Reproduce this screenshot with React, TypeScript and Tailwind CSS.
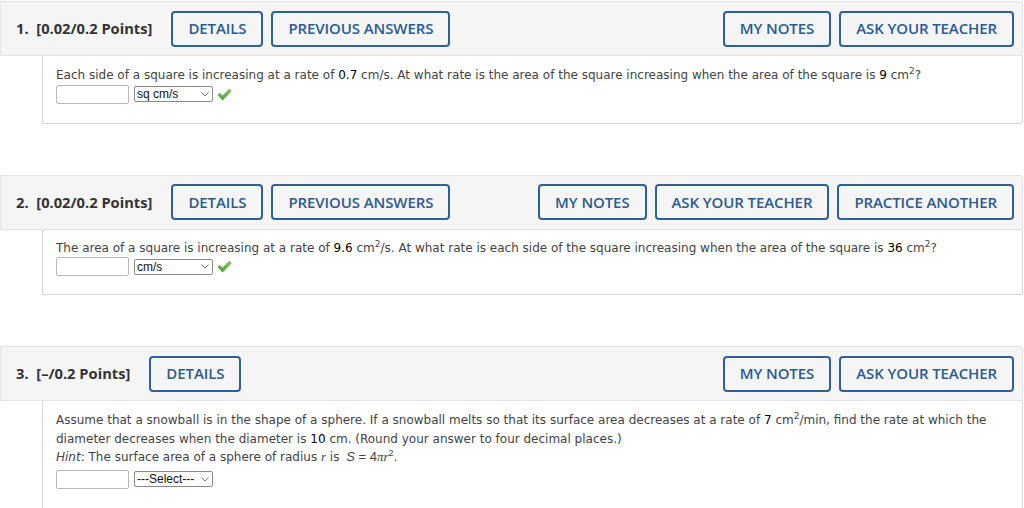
import React from "react";

const Btn = ({ children }: { children: React.ReactNode }) => (
  <div className="h-[36px] px-[15px] flex items-center border-2 border-[#2f6198] rounded-[4px] text-[#2b5b90] text-[15px] font-semibold tracking-[-0.1px] whitespace-nowrap bg-[#f5f5f5]" style={{ fontFamily: '"Open Sans", sans-serif' }}>
    {children}
  </div>
);

const Check = () => (
  <svg width="15" height="13" viewBox="0 0 15 13" className="ml-[4px]">
    <defs>
      <linearGradient id="cg" x1="0" y1="0" x2="0" y2="1">
        <stop offset="0" stopColor="#8fcb6a" />
        <stop offset="1" stopColor="#4e9a3a" />
      </linearGradient>
    </defs>
    <path d="M0.3 7 L2.8 4.8 L5.6 7.6 L12.4 0.6 L14.8 2.9 L5.6 12.4 Z" fill="url(#cg)" />
  </svg>
);

const Select = ({ label, w }: { label: string; w: number }) => (
  <div
    className="h-[16px] ml-[5px] border border-[#8a8a8a] rounded-[2px] flex items-center pl-[2px] pr-[3px] text-[12px] text-[#111] bg-white"
    style={{ width: w, fontFamily: '"Liberation Sans", Arial, sans-serif' }}
  >
    <span className="flex-1 leading-[14px]">{label}</span>
    <svg width="8" height="5" viewBox="0 0 8 5">
      <path d="M0.5 0.5 L4 4 L7.5 0.5" fill="none" stroke="#777" strokeWidth="1" />
    </svg>
  </div>
);

const Answer = ({ label, check }: { label: string; check?: boolean }) => (
  <div className="flex items-center h-[19px]">
    <div className="w-[73px] h-[19px] border border-[#b8b8b8] rounded-[2px] bg-white" />
    <Select label={label} w={79} />
    {check && <Check />}
  </div>
);

const N = ({ children }: { children: React.ReactNode }) => <span className="text-black">{children}</span>;
const Sup = ({ children }: { children: React.ReactNode }) => (
  <sup className="text-[9px] top-[-5px]">{children}</sup>
);

const Question = ({
  num,
  pts,
  left,
  right,
  children,
  bodyCls,
}: {
  num: string;
  pts: string;
  left: string[];
  right: string[];
  children: React.ReactNode;
  bodyCls: string;
}) => (
  <div className="mr-[1px]">
    <div className="h-[55px] bg-[#f5f5f5] border border-[#e3e3e3] rounded-tr-[3px] flex items-center pl-[15px] pr-[8px]">
      <div className="text-[14.7px] font-bold text-[#333] whitespace-pre" style={{ fontFamily: '"Open Sans", sans-serif' }}>
        {num}.{"  "}[{pts} Points]
      </div>
      <div className="flex gap-2 ml-[19px]">
        {left.map((l) => (
          <Btn key={l}>{l}</Btn>
        ))}
      </div>
      <div className="flex gap-2 ml-auto">
        {right.map((l) => (
          <Btn key={l}>{l}</Btn>
        ))}
      </div>
    </div>
    <div className={"ml-[42px] border-l border-r border-b border-[#d6d6d6] rounded-br-[3px] pl-[13px] " + bodyCls}>
      {children}
    </div>
  </div>
);

export default function App() {
  return (
    <div
      className="w-[1024px] h-[508px] overflow-hidden bg-white pt-px text-[#444] text-[12px] leading-[18.5px]"
      style={{ fontFamily: '"DejaVu Sans", Verdana, sans-serif' }}
    >
      <div className="flex flex-col gap-[51px]">
        <Question
          num="1"
          pts="0.02/0.2"
          left={["DETAILS", "PREVIOUS ANSWERS"]}
          right={["MY NOTES", "ASK YOUR TEACHER"]}
          bodyCls="pt-[10px] pb-[19px]"
        >
          <div>
            Each side of a square is increasing at a rate of <N>0.7</N> cm/s. At what rate is the area of the square
            increasing when the area of the square is <N>9</N> cm<Sup>2</Sup>?
          </div>
          <Answer label="sq cm/s" check />
        </Question>
        <Question
          num="2"
          pts="0.02/0.2"
          left={["DETAILS", "PREVIOUS ANSWERS"]}
          right={["MY NOTES", "ASK YOUR TEACHER", "PRACTICE ANOTHER"]}
          bodyCls="pt-[9px] pb-[18px]"
        >
          <div>
            The area of a square is increasing at a rate of <N>9.6</N> cm<Sup>2</Sup>/s. At what rate is each side of the
            square increasing when the area of the square is <N>36</N> cm<Sup>2</Sup>?
          </div>
          <Answer label="cm/s" check />
        </Question>
        <Question
          num="3"
          pts="–/0.2"
          left={["DETAILS"]}
          right={["MY NOTES", "ASK YOUR TEACHER"]}
          bodyCls="pt-[10px] pb-[20px] pr-[16px]"
        >
          <div>
            Assume that a snowball is in the shape of a sphere. If a snowball melts so that its surface area decreases at a
            rate of <N>7</N> cm<Sup>2</Sup>/min, find the rate at which the diameter decreases when the diameter is{" "}
            <N>10</N> cm. (Round your answer to four decimal places.)
          </div>
          <div>
            <i>Hint</i>: The surface area of a sphere of radius <i style={{ fontFamily: '"Liberation Serif", serif' }} className="text-[13px]">r</i> is{" "}
            <span className="ml-[3px] text-[13px]" style={{ fontFamily: '"Liberation Sans", Arial, sans-serif' }}>
              <i>S</i> = 4<i style={{ fontFamily: '"Liberation Serif", serif' }}>πr</i>
              <Sup>2</Sup>
            </span>
            .
          </div>
          <div className="mt-[3px]">
            <Answer label="---Select---" />
          </div>
        </Question>
      </div>
    </div>
  );
}
